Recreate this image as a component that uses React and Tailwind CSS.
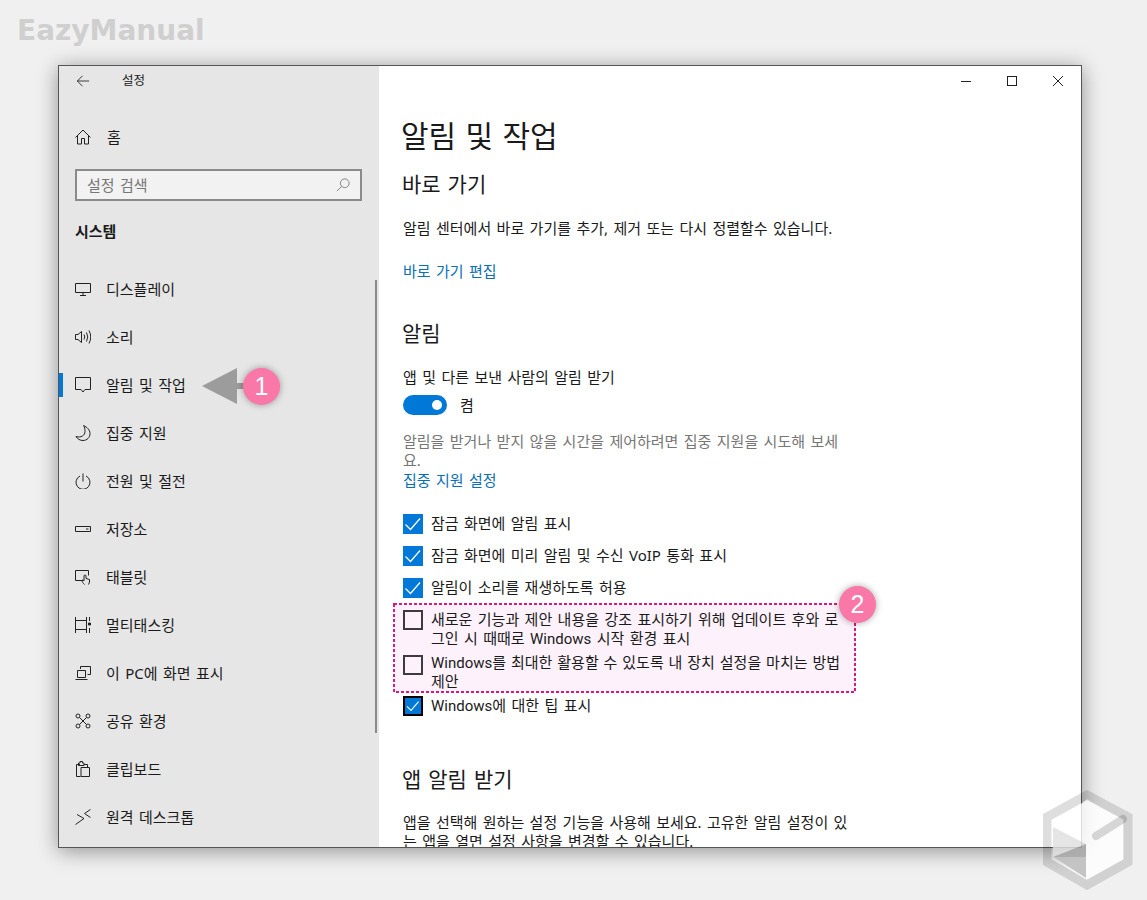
import React from "react";

const Icon = ({ children, className = "w-4 h-4" }) => (
  <svg viewBox="0 0 16 16" fill="none" stroke="#222" strokeWidth="1" className={`${className} shrink-0`}>
    {children}
  </svg>
);

const navItems = [
  { label: "디스플레이", icon: <><path d="M.5 2.500h15v9H.5z" /><path d="M8 11.500v2.500M5 14.500h6" /></> },
  { label: "소리", icon: <><path d="M.5 5.500h2.500L6.500 2.500v11L3 10.500H.5z" /><path d="M9 5.500q1.500 2.500 0 5M11.500 3.500q2.500 4.500 0 9M14 1.500q3.500 6.500 0 13" /></> },
  { label: "알림 및 작업", active: true, icon: <path d="M.5 .5h15v12H10l-2 2.500-2-2.500H.5z" /> },
  { label: "집중 지원", icon: <path d="M8.500.5C12 2 15 5 15 8.500c0 4-3 7-7 7-3 0-5.500-1.500-7-4 5 1.500 9-1 9-5 0-2.500-.5-4.500-1.500-6z" /> },
  { label: "전원 및 절전", icon: <><path d="M8 .5v8" /><path d="M5 3a7 7 0 1 0 6 0" /></> },
  { label: "저장소", icon: <><path d="M.5 5.500h15v5H.5z" /><path d="M11 8h2.500" /></> },
  { label: "태블릿", icon: <><path d="M8 11.500H.5v-10h13v5" /><path d="M9.500 15.500c-1-1-2.500-2.500-2.500-4 0-1 1.500-.5 2 .5V7a1 1 0 0 1 2 0v2.500l3.500 1v2.500l-1 2.500" /></> },
  { label: "멀티태스킹", icon: <><path d="M.5 0v16M11.500 0v16M.5 3.500h11M.5 12.500h11" /><path d="M14.500 0v4M14.500 11v5" /><path d="M13.500 6h2v2h-2z" fill="#222" /></> },
  { label: "이 PC에 화면 표시", icon: <><path d="M5.500 4V1.500h10v8h-3" /><path d="M2.500 5.500h8v7h-8zM.5 14.500h12" /></> },
  { label: "공유 환경", icon: <><circle cx="3" cy="3" r="2" /><circle cx="13" cy="3" r="2" /><circle cx="3" cy="13" r="2" /><circle cx="13" cy="13" r="2" /><path d="M4.500 4.500l7 7M11.500 4.500l-7 7" /></> },
  { label: "클립보드", icon: <><path d="M5 3.500H1.500v12h4M6 6.500h8.500v9H6zM12.500 6V3.500H9M3.500 3.500V2H5V.5h2.500V2H9v2.500H3.500z" /></> },
  { label: "원격 데스크톱", icon: <path d="M.5 15.500L9 9.500 2 5.500M15.500.5L9.500 4.500l6 4" /> },
];

const Check = ({ checked, focused }) => {
  if (!checked) return <span className="w-5 h-5 shrink-0 border-2 border-[#3f3a40]" />;
  return (
    <span className={`w-5 h-5 shrink-0 bg-[#0078d7] flex items-center justify-center ${focused ? "border-2 border-black" : ""}`}>
      <svg viewBox="0 0 20 20" fill="none" stroke="#fff" strokeWidth="1.300" className="w-full h-full">
        <path d="M2.500 10.500l5 5L17 4.500" />
      </svg>
    </span>
  );
};

const CheckRow = ({ checked, focused, className = "", children }) => (
  <div className={`flex items-start gap-2 text-[15px] leading-[19px] text-[#1a1a1a] whitespace-nowrap ${className}`}>
    <Check checked={checked} focused={focused} />
    <div>{children}</div>
  </div>
);

// "Windows" runs narrower in the original UI font
const Win = () => <span className="font-['Roboto',sans-serif]">Windows</span>;

const Badge = ({ n, className }) => (
  <div className={`absolute w-[37px] h-[37px] rounded-full bg-[#f978a8] shadow-[0_0_7px_rgba(0,0,0,0.35)] flex items-center justify-center text-white text-[25px] font-['Liberation_Sans',sans-serif] ${className}`}>
    {n}
  </div>
);

export default function App() {
  return (
    <div className="relative w-[1147px] h-[900px] overflow-hidden bg-[#f0f0f0] pt-[65px] pl-[58px] font-['Noto_Sans','Noto_Sans_CJK_KR',sans-serif] [word-spacing:1.5px]">
      <div className="absolute left-[17px] top-[13px] text-[28px] leading-[36px] font-bold text-[#cfcfcf] font-['DejaVu_Sans',sans-serif]">
        EazyManual
      </div>

      <div className="relative w-[1024px] h-[783px] flex border border-[#555] bg-white overflow-hidden shadow-[0_3px_20px_rgba(0,0,0,0.4)]">
        {/* sidebar */}
        <div className="relative w-[320px] shrink-0 bg-[#e6e6e6]">
          <div className="flex items-center h-[30px] pl-[17px]">
            <svg viewBox="0 0 16 16" fill="none" stroke="#222" strokeWidth="1" className="w-[14px] h-[14px]">
              <path d="M15 8H1.500M7.500 2L1.500 8l6 6" />
            </svg>
            <span className="ml-[32px] text-[12.500px] text-[#1a1a1a]">설정</span>
          </div>
          <div className="flex items-center h-[48px] mt-[17px] pl-[16px] text-[15px] text-[#1a1a1a]">
            <Icon>
              <path d="M.5 8.500L8 1l7.500 7.500M2.500 6.500v8.500h4V9.500h3V15h4V6.500" />
            </Icon>
            <span className="ml-[16px]">홈</span>
          </div>
          <div className="flex items-center justify-between h-[32px] mt-[8px] ml-[16px] w-[287px] border-2 border-[#8a8a8a] bg-[#f2f2f2] px-[10px] text-[15px] text-[#777]">
            <span>설정 검색</span>
            <svg viewBox="0 0 16 16" fill="none" stroke="#777" strokeWidth="1" className="w-[14px] h-[14px]">
              <circle cx="10" cy="6" r="5" />
              <path d="M6.500 9.500L1 15" />
            </svg>
          </div>
          <div className="flex items-center h-[28px] mt-[16px] pl-[16px] text-[15px] font-bold text-[#1a1a1a]">시스템</div>
          <div className="mt-[20px] flex flex-col">
            {navItems.map((item) => (
              <div key={item.label} className="flex items-center h-[48px] shrink-0 text-[15px] text-[#1a1a1a]">
                <span className={`w-1 h-6 shrink-0 ${item.active ? "bg-[#0078d7]" : ""}`} />
                <span className="ml-[12px]"><Icon>{item.icon}</Icon></span>
                <span className="ml-[15px] whitespace-nowrap">{item.label}</span>
              </div>
            ))}
          </div>
          {/* scrollbar */}
          <div className="absolute left-[316px] top-[214px] w-[2px] h-[453px] bg-[#8a8a8a]" />
        </div>

        {/* content */}
        <div className="flex-1 min-w-0 flex flex-col">
          <div className="flex justify-end h-[32px] shrink-0">
            <div className="w-[46px] flex items-center justify-center -mt-[2px]">
              <span className="w-[10px] h-px bg-[#222]" />
            </div>
            <div className="w-[46px] flex items-center justify-center -mt-[2px]">
              <span className="w-[10px] h-[10px] border border-[#222]" />
            </div>
            <div className="w-[46px] flex items-center justify-center -mt-[2px]">
              <svg viewBox="0 0 10 10" fill="none" stroke="#222" strokeWidth="1" className="w-[10px] h-[10px]">
                <path d="M0 0l10 10M10 0L0 10" />
              </svg>
            </div>
          </div>
          <div className="pl-[24px] flex flex-col">
            <div className="h-[40px] mt-[18px] -ml-[2px] text-[30px] leading-[40px] text-[#1a1a1a]">알림 및 작업</div>
            <div className="h-[30px] mt-[13px] -ml-[1px] text-[21px] leading-[30px] text-[#1a1a1a]">바로 가기</div>
            <div className="h-5 mt-[19px] text-[15px] leading-5 text-[#1a1a1a] whitespace-nowrap">알림 센터에서 바로 가기를 추가, 제거 또는 다시 정렬할수 있습니다.</div>
            <div className="h-5 mt-[23px] text-[15px] leading-5 text-[#0a6fb5]">바로 가기 편집</div>
            <div className="h-[30px] mt-[37px] -ml-[1px] text-[21px] leading-[30px] text-[#1a1a1a]">알림</div>
            <div className="h-5 mt-[19px] text-[15px] leading-5 text-[#1a1a1a]">앱 및 다른 보낸 사람의 알림 받기</div>
            <div className="flex items-center h-5 mt-2">
              <div className="w-[44px] h-5 rounded-full bg-[#0078d7] flex items-center justify-end pr-[5px]">
                <span className="w-[10px] h-[10px] rounded-full bg-white" />
              </div>
              <span className="ml-[13px] text-[15px] text-[#1a1a1a]">켬</span>
            </div>
            <div className="mt-[17px] text-[15px] leading-[19px] text-[#767676] whitespace-nowrap">
              알림을 받거나 받지 않을 시간을 제어하려면 집중 지원을 시도해 보세<br />요.
            </div>
            <div className="h-5 text-[15px] leading-5 text-[#0a6fb5]">집중 지원 설정</div>

            <CheckRow checked className="mt-[24px]">잠금 화면에 알림 표시</CheckRow>
            <CheckRow checked className="mt-[12px]">잠금 화면에 미리 알림 및 수신 VoIP 통화 표시</CheckRow>
            <CheckRow checked className="mt-[12px]">알림이 소리를 재생하도록 허용</CheckRow>

            <div className="relative w-[463px] h-[90px] mt-[5px] -ml-[10px] bg-[#fdf2fb] pl-[10px] pt-[7px]">
              <svg className="absolute inset-0 w-full h-full" fill="none">
                <rect x="1" y="1" width="461" height="88" stroke="#d81b7a" strokeWidth="2" strokeDasharray="3 2" />
              </svg>
              <CheckRow className="relative">
                새로운 기능과 제안 내용을 강조 표시하기 위해 업데이트 후와 로<br />그인 시 때때로 <Win /> 시작 환경 표시
              </CheckRow>
              <CheckRow className="relative mt-[6px] [word-spacing:1px]">
                <div className="-mt-[2px] leading-[18px]">
                  <Win />를 최대한 활용할 수 있도록 내 장치 설정을 마치는 방법<br />제안
                </div>
              </CheckRow>
            </div>

            <CheckRow checked focused className="mt-[3px]"><Win />에 대한 팁 표시</CheckRow>

            <div className="h-[30px] mt-[48px] -ml-[1px] text-[21px] leading-[30px] text-[#1a1a1a]">앱 알림 받기</div>
            <div className="mt-[19px] text-[15px] leading-[19px] text-[#1a1a1a] whitespace-nowrap">
              앱을 선택해 원하는 설정 기능을 사용해 보세요. 고유한 알림 설정이 있<br />는 앱을 열면 설정 사항을 변경할 수 있습니다.
            </div>
          </div>
        </div>
      </div>

      {/* annotation 1 */}
      <svg viewBox="0 0 50 36" className="absolute left-[202px] top-[368px] w-[50px] h-[36px]">
        <path d="M0 18L35 0v15h15v6H35v15z" fill="#9c9c9c" />
      </svg>
      <Badge n="1" className="left-[243px] top-[368px]" />
      {/* annotation 2 */}
      <Badge n="2" className="left-[839px] top-[586px]" />

      {/* watermark */}
      <svg viewBox="0 0 90 100" className="absolute left-[1043px] top-[790px] w-[90px] h-[100px]">
        <path d="M44 9L80 29V70L43 90 10 67V37z" fill="rgba(255,255,255,0.8)" />
        <path d="M10 37L43 54V67L10 67z" fill="rgba(0,0,0,0.1)" />
        <path d="M10 67L43 54V88z" fill="rgba(0,0,0,0.22)" />
        <path d="M44 5L85 27V72L44 95 4 72V27z" fill="none" stroke="rgba(0,0,0,0.13)" strokeWidth="9" />
        <path d="M53 46L80 29" stroke="rgba(0,0,0,0.15)" strokeWidth="8" strokeLinecap="round" />
      </svg>
    </div>
  );
}
